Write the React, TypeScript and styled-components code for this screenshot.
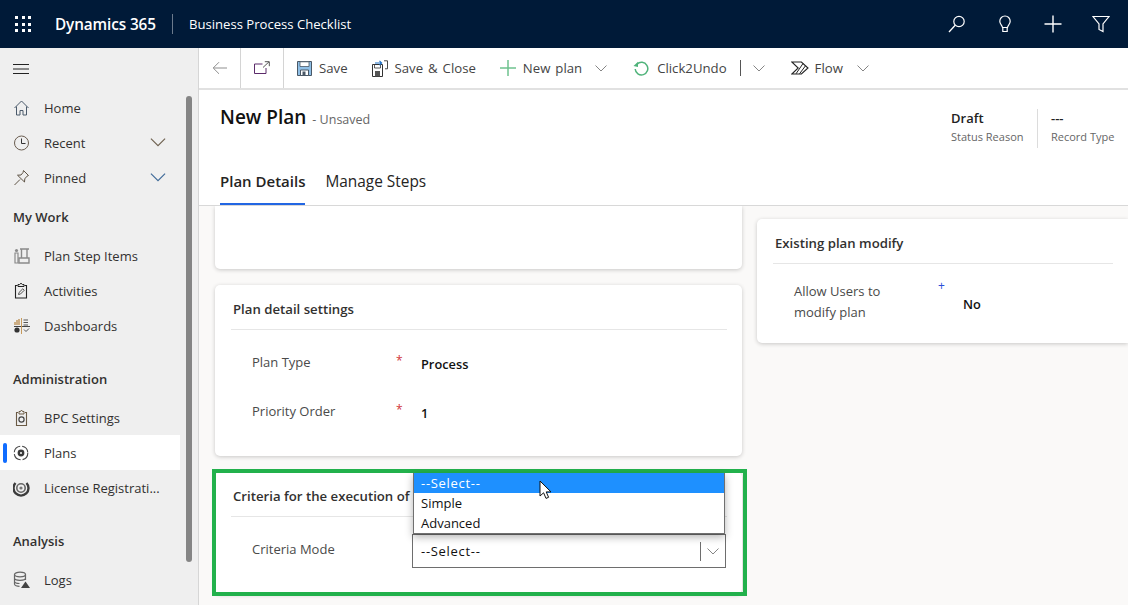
import React from 'react';
import styled, { createGlobalStyle } from 'styled-components';

const FONT = '"Open Sans", "Noto Sans", "Liberation Sans", sans-serif';

const GlobalStyle = createGlobalStyle`
  html, body {
    margin: 0;
    padding: 0;
    height: 100%;
    overflow: hidden;
    background: #faf9f8;
    font-family: ${FONT};
  }
  * { box-sizing: border-box; }
`;

const Page = styled.div`
  width: 1128px;
  height: 605px;
  display: flex;
  flex-direction: column;
  overflow: hidden;
`;

/* Top bar */
const TopBar = styled.header`
  height: 48px;
  flex: none;
  display: flex;
  align-items: center;
  background: #001a38;
  color: #fff;
  padding-left: 15px;
`;
const Waffle = styled.div`
  width: 16px;
  height: 16px;
  display: grid;
  grid-template-columns: repeat(3, 3px);
  grid-template-rows: repeat(3, 3px);
  justify-content: space-between;
  align-content: space-between;
  margin-right: 24px;
  i { background: #fff; }
`;
const Brand = styled.span`
  font-size: 15.3px;
  font-weight: 600;
  letter-spacing: -0.1px;
  width: 117px;
`;
const BarDivider = styled.span`
  width: 1px;
  height: 20px;
  background: #6b7a8c;
  margin-right: 16px;
`;
const AppName = styled.span`
  font-size: 13.1px;
  flex: 1;
`;
const BarIcons = styled.div`
  display: flex;
  align-items: center;
  gap: 30px;
  padding-right: 18px;
`;

const Body = styled.div`
  flex: 1;
  display: flex;
  min-height: 0;
`;

/* Sidebar */
const Sidebar = styled.nav`
  width: 199px;
  flex: none;
  position: relative;
  background: #efefef;
  border-right: 1px solid #d6d6d6;
`;
const Hamburger = styled.div`
  height: 42px;
  display: flex;
  align-items: center;
  padding-left: 13px;
`;
const NavRow = styled.div<{ $active?: boolean }>`
  width: 180px;
  height: 35px;
  display: flex;
  align-items: center;
  position: relative;
  padding-left: 13px;
  font-size: 13px;
  color: #323130;
  background: ${(p) => (p.$active ? '#fff' : 'transparent')};
`;
const NavIcon = styled.span`
  width: 31px;
  height: 18px;
  flex: none;
  display: flex;
  align-items: center;
`;
const NavLabel = styled.span`
  flex: 1;
  white-space: nowrap;
`;
const NavChevron = styled.span`
  display: flex;
  margin-right: 14px;
`;
const ActiveMark = styled.span`
  position: absolute;
  left: 3px;
  top: 8px;
  width: 4px;
  height: 20px;
  border-radius: 2px;
  background: #0f6cff;
`;
const NavHeading = styled.div<{ $top?: number }>`
  height: 43px;
  margin-top: ${(p) => p.$top ?? 0}px;
  display: flex;
  align-items: center;
  padding-left: 13px;
  font-size: 13px;
  font-weight: 600;
  color: #323130;
`;
const SideScroll = styled.div`
  position: absolute;
  left: 186px;
  top: 48px;
  width: 6px;
  height: 466px;
  border-radius: 3px;
  background: #858585;
`;

/* Main column */
const Main = styled.main`
  flex: 1;
  min-width: 0;
  display: flex;
  flex-direction: column;
`;
const Toolbar = styled.div`
  height: 42px;
  flex: none;
  display: flex;
  align-items: center;
  background: #fff;
  border-bottom: 2px solid #e1e1e1;
`;
const NavBox = styled.div<{ $w: number }>`
  width: ${(p) => p.$w}px;
  height: 40px;
  flex: none;
  display: flex;
  align-items: center;
  justify-content: center;
  border-right: 1px solid #d4d4d4;
`;
const ToolItem = styled.div<{ $ml: number; $gap?: number }>`
  display: flex;
  align-items: center;
  gap: ${(p) => p.$gap ?? 7}px;
  margin-left: ${(p) => p.$ml}px;
  font-size: 13.2px;
  word-spacing: 1.5px;
  color: #444;
  white-space: nowrap;
`;
const ToolSep = styled.span`
  width: 1px;
  height: 16px;
  background: #555;
  margin-left: 13px;
`;

const Header = styled.div`
  height: 116px;
  flex: none;
  display: flex;
  flex-direction: column;
  background: #fff;
  border-bottom: 1px solid #d8d8d8;
`;
const HeaderTop = styled.div`
  height: 76px;
  display: flex;
  justify-content: space-between;
  padding: 14px 1px 0 21px;
`;
const TitleRow = styled.div`
  display: flex;
  align-items: baseline;
  gap: 6px;
`;
const Title = styled.h1`
  margin: 0;
  font-size: 19px;
  font-weight: 600;
  color: #111;
  line-height: 26px;
`;
const Unsaved = styled.span`
  font-size: 12.5px;
  color: #666;
`;
const Stats = styled.div`
  display: flex;
  padding-top: 5px;
  height: 44px;
`;
const Stat = styled.div`
  width: 90px;
  padding-left: 13px;
  border-left: 1px solid #dcdcdc;
  &:first-child {
    width: 86px;
    border-left: none;
    padding-left: 0;
  }
`;
const StatValue = styled.div`
  font-size: 13px;
  font-weight: 600;
  line-height: 18px;
  color: #222;
`;
const StatLabel = styled.div`
  font-size: 11px;
  line-height: 20px;
  color: #666;
  white-space: nowrap;
`;
const Tabs = styled.div`
  height: 39px;
  display: flex;
  gap: 20px;
  padding-left: 21px;
`;
const Tab = styled.div<{ $active?: boolean }>`
  height: 39px;
  display: flex;
  align-items: flex-start;
  padding-top: 5px;
  font-size: ${(p) => (p.$active ? 15 : 15.4)}px;
  font-weight: ${(p) => (p.$active ? 600 : 400)};
  color: #252423;
  border-bottom: 2px solid ${(p) => (p.$active ? '#2266e3' : 'transparent')};
`;

/* Form area */
const Content = styled.div`
  flex: 1;
  min-height: 0;
  overflow: hidden;
  display: flex;
  gap: 15px;
  padding-left: 16px;
  background: #faf9f8;
`;
const LeftColumn = styled.div`
  width: 527px;
  flex: none;
  display: flex;
  flex-direction: column;
  gap: 16px;
`;
const RightColumn = styled.div`
  flex: 1;
  min-width: 0;
  padding-top: 13px;
`;
const Card = styled.section<{ $h: number; $clipped?: boolean; $open?: boolean }>`
  height: ${(p) => p.$h}px;
  flex: none;
  position: relative;
  background: #fff;
  border-radius: ${(p) =>
    p.$clipped ? '0 0 5px 5px' : p.$open ? '5px 0 0 5px' : '5px'};
  box-shadow: 0 1px 4px rgba(0, 0, 0, 0.2);
  padding: 0 15px 0 16px;
`;
const CardTitle = styled.div`
  height: 45px;
  display: flex;
  align-items: center;
  padding: 3px 0 0 2px;
  font-size: 13.2px;
  font-weight: 600;
  color: #323130;
  border-bottom: 1px solid #e6e6e6;
  white-space: nowrap;
`;
const Field = styled.div<{ $h: number }>`
  height: ${(p) => p.$h}px;
  display: flex;
  align-items: center;
  padding-left: 21px;
`;
const FieldLabel = styled.div`
  width: 144px;
  font-size: 13px;
  line-height: 21px;
  color: #4a4a4a;
  flex: none;
  margin-top: -3px;
`;
const Req = styled.span<{ $color: string; $up: number }>`
  width: 25px;
  flex: none;
  font-size: 12px;
  line-height: 12px;
  color: ${(p) => p.$color};
  margin-top: -${(p) => p.$up}px;
`;
const FieldValue = styled.div`
  font-size: 12.8px;
  font-weight: 600;
  color: #111;
`;
const FieldRows = styled.div<{ $top: number }>`
  padding-top: ${(p) => p.$top}px;
`;

/* Criteria select + open list */
const SelectWrap = styled.div`
  width: 314px;
  height: 34px;
  position: relative;
  margin-left: 16px;
  flex: none;
`;
const SelectBox = styled.div`
  height: 34px;
  display: flex;
  align-items: center;
  padding-left: 8px;
  border: 1px solid #6e6e6e;
  background: #fff;
  font-size: 13px;
  color: #111;
`;
const SelectText = styled.span`
  flex: 1;
  letter-spacing: 0.7px;
`;
const SelectArrow = styled.span`
  width: 25px;
  height: 19px;
  display: flex;
  align-items: center;
  justify-content: center;
  border-left: 1px solid #6e6e6e;
`;
const ListBox = styled.div`
  position: absolute;
  left: 1px;
  right: 1px;
  bottom: 100%;
  z-index: 3;
  background: #fff;
  border: 1px solid #707070;
  border-top: none;
  box-shadow: 0 3px 8px rgba(0, 0, 0, 0.3);
`;
const ListOption = styled.div<{ $active?: boolean }>`
  height: 20px;
  display: flex;
  align-items: center;
  padding-left: 7px;
  font-size: 13px;
  letter-spacing: ${(p) => (p.$active ? 0.7 : 0)}px;
  color: ${(p) => (p.$active ? '#fff' : '#111')};
  background: ${(p) => (p.$active ? '#1e90ff' : '#fff')};
`;
const Pointer = styled.svg`
  position: absolute;
  left: 125px;
  top: 7px;
  z-index: 4;
`;
const GreenFrame = styled.div`
  position: absolute;
  left: -3px;
  top: -3px;
  width: 535px;
  height: 127px;
  border: 4px solid #22b14c;
  z-index: 2;
  pointer-events: none;
`;

/* Icons */
const Svg: React.FC<{ w?: number; h?: number; vb?: string; children: React.ReactNode }> = ({
  w = 18,
  h = 18,
  vb = '0 0 18 18',
  children,
}) => (
  <svg width={w} height={h} viewBox={vb} fill="none" style={{ display: 'block', flex: 'none' }}>
    {children}
  </svg>
);

const Chevron = ({ w = 12, h = 7, color = '#777' }: { w?: number; h?: number; color?: string }) => (
  <Svg w={w} h={h} vb="0 0 12 7">
    <path d="M.5.5 6 6 11.5.5" stroke={color} strokeWidth={0.9} />
  </Svg>
);

const HomeIcon = () => (
  <Svg>
    <path d="M1.5 9 8.5 2l7 7M3.5 7.5V16h3.5v-4.5h3V16h3.5V7.5" stroke="#4b5a6b" strokeWidth={1} />
  </Svg>
);
const ClockIcon = () => (
  <Svg>
    <circle cx="8.5" cy="9" r="7" stroke="#6a5d50" strokeWidth={1} />
    <path d="M8.5 4.5V9.5H12.5" stroke="#333" strokeWidth={1} />
  </Svg>
);
const PinIcon = () => (
  <Svg>
    <path
      d="M10.5 1.5 15.5 6.5 14 7.2 11.8 9.8 11.5 13 4.5 6.2 8 6 10 3.5ZM7 10.5 1.5 16"
      stroke="#5e5345"
      strokeWidth={1}
    />
  </Svg>
);
const FactoryIcon = () => (
  <Svg>
    <path d="M7 2h9M8.5 2v9M14 2v9M6 11h10v5H6z" stroke="#8a8a8a" strokeWidth={1.4} />
    <circle cx="3.5" cy="3.5" r="1.6" fill="#8a8a8a" />
    <path d="M2 6h3v10H2z" stroke="#8a8a8a" strokeWidth={1.2} />
  </Svg>
);
const ClipboardIcon = () => (
  <Svg>
    <path d="M4.5 3.5H2.5v12.5h11V3.5h-2" stroke="#222" strokeWidth={1.1} />
    <path d="M5 4.5V2.5h1.6L8 1.2 9.4 2.5H11v2z" stroke="#222" strokeWidth={1} />
    <path d="M5.5 12.5 6 10.5 9.8 6.8 11.3 8.2 7.5 12z" stroke="#555" strokeWidth={1} />
  </Svg>
);
const DashIcon = () => (
  <Svg>
    <path d="M1 9.5h16" stroke="#444" strokeWidth={1} />
    <path d="M8.5 1v16" stroke="#c79a5c" strokeWidth={1} />
    <path d="M2 8V5M4 8V3M6 8V2" stroke="#b98a4b" strokeWidth={1.3} />
    <path d="M10.5 3H15M10.5 5.5H15M10.5 8H15" stroke="#555" strokeWidth={1} />
    <circle cx="4" cy="13" r="2.6" fill="#333" />
    <path d="M11 12.5 13 14.5 16 11.5" stroke="#555" strokeWidth={1} />
  </Svg>
);
const SettingsBoardIcon = () => (
  <Svg>
    <path d="M5 3.5H3.5v13h10v-13H12" stroke="#6a5a45" strokeWidth={1.1} />
    <path d="M6 5V2.5h1.5L8.5 1l1 1.5H11V5z" stroke="#6a5a45" strokeWidth={1} />
    <circle cx="8.5" cy="10.5" r="2.6" stroke="#444" strokeWidth={1.2} />
  </Svg>
);
const PlansIcon = () => (
  <Svg>
    <circle cx="8" cy="9" r="6.8" stroke="#444" strokeWidth={1.1} strokeDasharray="9 2" />
    <circle cx="8" cy="9" r="3.4" fill="#3a3a3a" />
    <circle cx="8" cy="9" r="1" fill="#fff" />
  </Svg>
);
const LicenseIcon = () => (
  <Svg>
    <path d="M2.5 4A7.5 7.5 0 1 0 13.5 4" stroke="#3c3c3c" strokeWidth={2.4} />
    <circle cx="8" cy="9" r="4.2" stroke="#666" strokeWidth={1.6} />
    <circle cx="8" cy="9" r="1.6" fill="#777" />
  </Svg>
);
const LogsIcon = () => (
  <Svg>
    <ellipse cx="7" cy="3.5" rx="5.5" ry="2.3" stroke="#666" strokeWidth={1.2} />
    <path d="M1.5 3.5v9.5c0 1.2 2.5 2.3 5 2.3M12.5 3.5V9M1.5 7c0 1.3 2.5 2.3 5.5 2.3s5.5-1 5.5-2.3M1.5 10.3c0 1.2 2 2.2 5 2.2" stroke="#666" strokeWidth={1.2} />
    <path d="M12.5 10.5 17 17H8z" fill="#444" />
  </Svg>
);
const BackIcon = () => (
  <Svg w={16} h={14} vb="0 0 16 14">
    <path d="M15 7H1.5M7 1.2 1.2 7 7 12.8" stroke="#8f8f8f" strokeWidth={1} />
  </Svg>
);
const PopoutIcon = () => (
  <Svg w={16} h={14} vb="0 0 16 14">
    <path d="M8.5 3H.5v9.5h11.5V7" stroke="#5b2a6a" strokeWidth={1} />
    <path d="M9 6.5 15 .8M10.8.7h4.5v4.5" stroke="#555" strokeWidth={1} />
  </Svg>
);
const SaveIcon = () => (
  <Svg w={15} h={15} vb="0 0 15 15">
    <path d="M.5.5h14v14H.5z" fill="#8fbfe6" stroke="#4a5866" />
    <path d="M3 .8h9v4.7H3z" fill="#fff" stroke="#4a5866" strokeWidth={0.8} />
    <path d="M3.5 9h8v5.5h-8z" fill="#fff" stroke="#4a5866" />
    <path d="M5.5 10.5h3v4h-3z" fill="#4a5866" />
  </Svg>
);
const SaveCloseIcon = () => (
  <Svg w={16} h={17} vb="0 0 16 17">
    <path d="M.5 4.5h10v12H.5z" fill="#fff" stroke="#333" />
    <path d="M2.5 4.5h6v3.5h-6z" stroke="#333" strokeWidth={0.8} />
    <path d="M3 11h5v5.5H3z" fill="#555" />
    <path d="M3 3H9.5M7.5.8l2.2 2.2-2.2 2.2" stroke="#1d6fc4" strokeWidth={1.1} />
    <path d="M12 .8h3.5v8H13" stroke="#333" strokeWidth={0.9} />
  </Svg>
);
const UndoIcon = () => (
  <Svg w={16} h={16} vb="0 0 16 16">
    <path d="M4 4.2A6.3 6.3 0 1 1 2.2 9" stroke="#4fb37a" strokeWidth={1.5} />
    <path d="M.5 6 5 7V1.8z" fill="#4fb37a" />
  </Svg>
);
const FlowIcon = () => (
  <Svg w={18} h={14} vb="0 0 18 14">
    <path d="M.8 1h9.6l6.6 6-6.6 6H.8l6.4-6z" stroke="#222" strokeWidth={1.1} />
    <path d="M12 2.5 5 12.8M14.5 4.8 8.5 12.8" stroke="#222" strokeWidth={1} />
  </Svg>
);

const mainNav = [
  { label: 'Home', icon: <HomeIcon /> },
  { label: 'Recent', icon: <ClockIcon />, chevron: '#6f6250' },
  { label: 'Pinned', icon: <PinIcon />, chevron: '#3f6a98' },
];
const workNav = [
  { label: 'Plan Step Items', icon: <FactoryIcon /> },
  { label: 'Activities', icon: <ClipboardIcon /> },
  { label: 'Dashboards', icon: <DashIcon /> },
];

export default function App() {
  return (
    <Page>
      <GlobalStyle />
      <TopBar>
        <Waffle>
          {Array.from({ length: 9 }).map((_, i) => (
            <i key={i} />
          ))}
        </Waffle>
        <Brand>Dynamics 365</Brand>
        <BarDivider />
        <AppName>Business Process Checklist</AppName>
        <BarIcons>
          <Svg>
            <circle cx="11" cy="6.5" r="5.2" stroke="#fff" strokeWidth={1.2} />
            <path d="M7.2 10.3 1 17" stroke="#fff" strokeWidth={1.3} />
          </Svg>
          <Svg>
            <path
              d="M6.5 12.5C6.3 10.5 3.8 9.3 3.8 6.2a5.2 5.2 0 0 1 10.4 0c0 3.1-2.5 4.3-2.7 6.3zM6.8 12.5v4h4.4v-4"
              stroke="#fff"
              strokeWidth={1.2}
            />
          </Svg>
          <Svg>
            <path d="M9 .5v17M.5 9h17" stroke="#fff" strokeWidth={1.4} />
          </Svg>
          <Svg>
            <path d="M1 1.5h16L11 9v7.5l-4-2V9z" stroke="#fff" strokeWidth={1.2} />
          </Svg>
        </BarIcons>
      </TopBar>

      <Body>
        <Sidebar>
          <Hamburger>
            <Svg w={16} h={10} vb="0 0 16 10">
              <path d="M0 .5h16M0 5h16M0 9.5h16" stroke="#222" strokeWidth={1} />
            </Svg>
          </Hamburger>
          {mainNav.map((n) => (
            <NavRow key={n.label}>
              <NavIcon>{n.icon}</NavIcon>
              <NavLabel>{n.label}</NavLabel>
              {n.chevron && (
                <NavChevron>
                  <Chevron w={16} h={9} color={n.chevron} />
                </NavChevron>
              )}
            </NavRow>
          ))}
          <NavHeading>My Work</NavHeading>
          {workNav.map((n) => (
            <NavRow key={n.label}>
              <NavIcon>{n.icon}</NavIcon>
              <NavLabel>{n.label}</NavLabel>
            </NavRow>
          ))}
          <NavHeading $top={14}>Administration</NavHeading>
          <NavRow>
            <NavIcon>
              <SettingsBoardIcon />
            </NavIcon>
            <NavLabel>BPC Settings</NavLabel>
          </NavRow>
          <NavRow $active>
            <ActiveMark />
            <NavIcon>
              <PlansIcon />
            </NavIcon>
            <NavLabel>Plans</NavLabel>
          </NavRow>
          <NavRow>
            <NavIcon>
              <LicenseIcon />
            </NavIcon>
            <NavLabel>License Registrati...</NavLabel>
          </NavRow>
          <NavHeading $top={14}>Analysis</NavHeading>
          <NavRow>
            <NavIcon>
              <LogsIcon />
            </NavIcon>
            <NavLabel>Logs</NavLabel>
          </NavRow>
          <SideScroll />
        </Sidebar>

        <Main>
          <Toolbar>
            <NavBox $w={42}>
              <BackIcon />
            </NavBox>
            <NavBox $w={43}>
              <PopoutIcon />
            </NavBox>
            <ToolItem $ml={13}>
              <SaveIcon />
              Save
            </ToolItem>
            <ToolItem $ml={24}>
              <SaveCloseIcon />
              Save &amp; Close
            </ToolItem>
            <ToolItem $ml={24}>
              <Svg w={16} h={16} vb="0 0 16 16">
                <path d="M8 0v16M0 8h16" stroke="#6fc28f" strokeWidth={1.5} />
              </Svg>
              New plan
            </ToolItem>
            <ToolItem $ml={13}>
              <Chevron />
            </ToolItem>
            <ToolItem $ml={26} $gap={8}>
              <UndoIcon />
              Click2Undo
            </ToolItem>
            <ToolSep />
            <ToolItem $ml={12}>
              <Chevron />
            </ToolItem>
            <ToolItem $ml={26} $gap={6}>
              <FlowIcon />
              Flow
            </ToolItem>
            <ToolItem $ml={14}>
              <Chevron />
            </ToolItem>
          </Toolbar>

          <Header>
            <HeaderTop>
              <TitleRow>
                <Title>New Plan</Title>
                <Unsaved>- Unsaved</Unsaved>
              </TitleRow>
              <Stats>
                <Stat>
                  <StatValue>Draft</StatValue>
                  <StatLabel>Status Reason</StatLabel>
                </Stat>
                <Stat>
                  <StatValue>---</StatValue>
                  <StatLabel>Record Type</StatLabel>
                </Stat>
              </Stats>
            </HeaderTop>
            <Tabs>
              <Tab $active>Plan Details</Tab>
              <Tab>Manage Steps</Tab>
            </Tabs>
          </Header>

          <Content>
            <LeftColumn>
              <Card $h={63} $clipped />
              <Card $h={171}>
                <CardTitle>Plan detail settings</CardTitle>
                <FieldRows $top={9}>
                  <Field $h={49}>
                    <FieldLabel>Plan Type</FieldLabel>
                    <Req $color="#d13438" $up={5}>*</Req>
                    <FieldValue>Process</FieldValue>
                  </Field>
                  <Field $h={49}>
                    <FieldLabel>Priority Order</FieldLabel>
                    <Req $color="#d13438" $up={5}>*</Req>
                    <FieldValue>1</FieldValue>
                  </Field>
                </FieldRows>
              </Card>
              <Card $h={122}>
                <GreenFrame />
                <CardTitle>Criteria for the execution of</CardTitle>
                <FieldRows $top={17}>
                  <Field $h={34}>
                    <FieldLabel>Criteria Mode</FieldLabel>
                    <SelectWrap>
                      <ListBox>
                        <ListOption $active>
                          --Select--
                          <Pointer width="14" height="20" viewBox="0 0 14 20">
                            <path
                              d="M1 1v15l3.6-3.2 2.4 5.6 2.6-1.1-2.4-5.4H12z"
                              fill="#fff"
                              stroke="#111"
                            />
                          </Pointer>
                        </ListOption>
                        <ListOption>Simple</ListOption>
                        <ListOption>Advanced</ListOption>
                      </ListBox>
                      <SelectBox>
                        <SelectText>--Select--</SelectText>
                        <SelectArrow>
                          <Chevron />
                        </SelectArrow>
                      </SelectBox>
                    </SelectWrap>
                  </Field>
                </FieldRows>
              </Card>
            </LeftColumn>

            <RightColumn>
              <Card $h={124} $open>
                <CardTitle>Existing plan modify</CardTitle>
                <Field $h={79}>
                  <FieldLabel>
                    Allow Users to
                    <br />
                    modify plan
                  </FieldLabel>
                  <Req $color="#2b4fd9" $up={35}>+</Req>
                  <FieldValue>No</FieldValue>
                </Field>
              </Card>
            </RightColumn>
          </Content>
        </Main>
      </Body>
    </Page>
  );
}
